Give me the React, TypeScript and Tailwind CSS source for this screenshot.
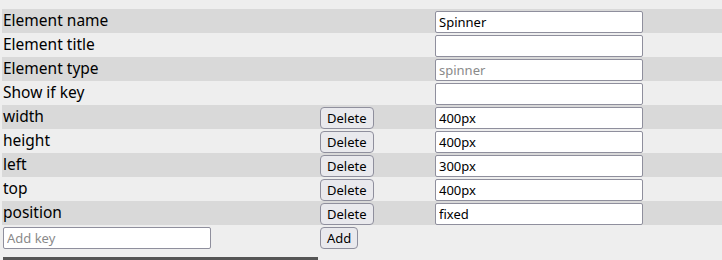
import React from "react";

const font = { fontFamily: '"Noto Sans", "Open Sans", sans-serif' };

type Row = { label: string; value: string; del?: boolean; placeholder?: string };

const rows: Row[] = [
  { label: "Element name", value: "Spinner" },
  { label: "Element title", value: "" },
  { label: "Element type", value: "", placeholder: "spinner" },
  { label: "Show if key", value: "" },
  { label: "width", value: "400px", del: true },
  { label: "height", value: "400px", del: true },
  { label: "left", value: "300px", del: true },
  { label: "top", value: "400px", del: true },
  { label: "position", value: "fixed", del: true },
];

const btn =
  "h-[22px] px-[6px] rounded-[4px] border border-[#8f8f9d] bg-[#e9e9ed] text-[13px] text-black leading-none";
const inp =
  "h-[22px] border border-[#8f8f9d] bg-white px-[3px] text-[13px] text-black outline-none placeholder:text-[#8a8a8a] rounded-[2px]";

export default function App() {
  return (
    <div className="w-[722px] h-[260px] bg-[#eeeeee] overflow-hidden" style={font}>
      <div className="pt-[9px] pl-[2px]">
        {rows.map((r, i) => (
          <div
            key={i}
            className={`flex items-center h-[24px] ${i % 2 === 0 ? "bg-[#d9d9d9]" : ""}`}
          >
            <div className="w-[316px] pl-[1px] pb-[1px] text-[15.5px] text-black leading-none">{r.label}</div>
            <div className="w-[115px] pl-[2px]">
              {r.del && <button className={btn}>Delete</button>}
            </div>
            <div className="pl-[2px]">
              <input
                className={`${inp} w-[208px]`}
                defaultValue={r.value}
                placeholder={r.placeholder}
              />
            </div>
          </div>
        ))}
        <div className="flex items-center h-[24px]">
          <div className="w-[316px] pl-[1px]">
            <input className={`${inp} w-[208px]`} placeholder="Add key" />
          </div>
          <div className="pl-[2px]">
            <button className={btn}>Add</button>
          </div>
        </div>
        <div className="mt-[8px] ml-[1px] w-[315px] h-[3px] bg-[#555555]" />
      </div>
    </div>
  );
}
